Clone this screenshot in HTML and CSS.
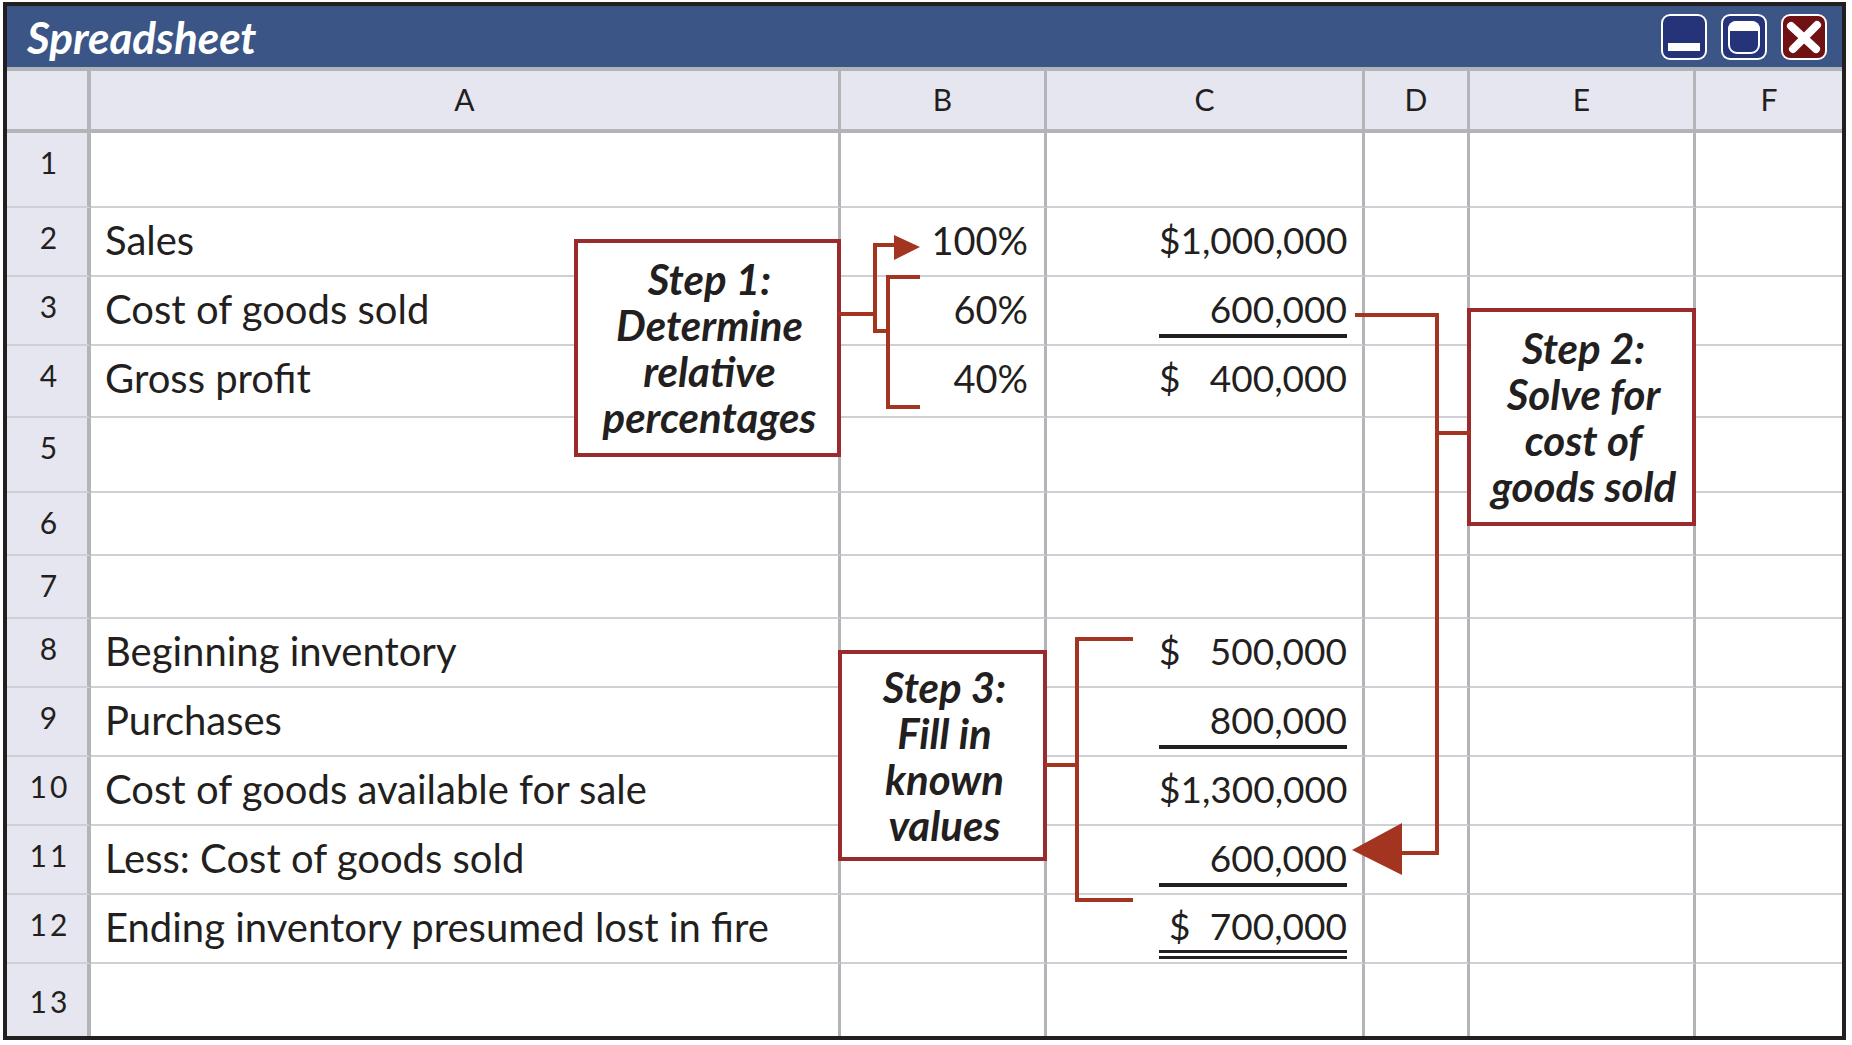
FILE: index.html
```
<!DOCTYPE html>
<html lang="en">
<head>
<meta charset="utf-8">
<title>Spreadsheet</title>
<link rel="stylesheet" href="styles.css">
</head>

<body>
<div class="window">
    <!-- title bar -->
    <div class="titlebar">
        <h1>Spreadsheet</h1>
        <button type="button" class="btn" aria-label="Minimize">
            <svg viewBox="0 0 46 46"><rect x="7" y="29" width="32" height="8" fill="#fff"/></svg>
        </button>
        <button type="button" class="btn" aria-label="Maximize">
            <svg viewBox="0 0 46 46">
                <rect x="8" y="8" width="30" height="31" rx="8" fill="none" stroke="#fff" stroke-width="2"/>
                <path d="M7 17v-2a8 8 0 0 1 8-8h16a8 8 0 0 1 8 8v2z" fill="#fff"/>
            </svg>
        </button>
        <button type="button" class="btn close" aria-label="Close">
            <svg viewBox="0 0 46 46"><path d="M10 12L35 35M36 11L12 35" stroke="#fff" stroke-width="8" stroke-linecap="round"/></svg>
        </button>
    </div>

    <table class="sheet">
        <colgroup>
            <col class="num"><col class="a"><col class="b"><col class="c"><col class="d"><col class="e"><col class="f">
        </colgroup>
        <thead>
            <tr><th></th><th>A</th><th>B</th><th>C</th><th>D</th><th>E</th><th>F</th></tr>
        </thead>
        <tbody>
            <tr class="tall"><th>1</th><td></td><td></td><td></td><td></td><td></td><td></td></tr>
            <tr>
                <th>2</th>
                <td class="anchor">Sales
                    <div class="note step1">Step 1:<br>Determine<br>relative<br>percentages</div>
                </td>
                <td class="percent anchor">100%
                    <svg class="link link1" width="80" height="204" viewBox="0 0 80 204">
                        <path d="M-3 106H34M55 37H34V123H47M79 69H47V199H79"/>
                        <polygon points="53,27 79,39 53,52"/>
                    </svg>
                </td>
                <td><div class="amount"><span>$</span><span>1,000,000</span></div></td>
                <td></td><td></td><td></td>
            </tr>
            <tr>
                <th>3</th>
                <td>Cost of goods sold</td>
                <td class="percent">60%</td>
                <td><div class="amount line"><span></span><span>600,000</span></div></td>
                <td class="anchor">
                    <svg class="link link2" width="120" height="600" viewBox="0 0 120 600">
                        <path d="M-10 38H72V576H36M72 156H106"/>
                        <polygon points="37,546 -13,573 37,598"/>
                    </svg>
                </td>
                <td class="anchor">
                    <div class="note">Step 2:<br>Solve for<br>cost of<br>goods sold</div>
                </td>
                <td></td>
            </tr>
            <tr class="mid">
                <th>4</th>
                <td>Gross profit</td>
                <td class="percent">40%</td>
                <td><div class="amount"><span>$</span><span>400,000</span></div></td>
                <td></td><td></td><td></td>
            </tr>
            <tr class="tall"><th>5</th><td></td><td></td><td></td><td></td><td></td><td></td></tr>
            <tr class="short"><th>6</th><td></td><td></td><td></td><td></td><td></td><td></td></tr>
            <tr class="short"><th>7</th><td></td><td></td><td></td><td></td><td></td><td></td></tr>
            <tr>
                <th>8</th>
                <td>Beginning inventory</td>
                <td class="anchor">
                    <div class="note step3">Step 3:<br>Fill in<br>known<br>values</div>
                </td>
                <td class="anchor">
                    <svg class="link link3" width="90" height="284" viewBox="0 0 90 284">
                        <path d="M86 20H30V281H86M-2 146H30"/>
                    </svg>
                    <div class="amount"><span>$</span><span>500,000</span></div>
                </td>
                <td></td><td></td><td></td>
            </tr>
            <tr>
                <th>9</th>
                <td>Purchases</td>
                <td></td>
                <td><div class="amount line"><span></span><span>800,000</span></div></td>
                <td></td><td></td><td></td>
            </tr>
            <tr>
                <th>10</th>
                <td>Cost of goods available for sale</td>
                <td></td>
                <td><div class="amount"><span>$</span><span>1,300,000</span></div></td>
                <td></td><td></td><td></td>
            </tr>
            <tr>
                <th>11</th>
                <td>Less: Cost of goods sold</td>
                <td></td>
                <td><div class="amount line"><span></span><span>600,000</span></div></td>
                <td></td><td></td><td></td>
            </tr>
            <tr>
                <th>12</th>
                <td>Ending inventory presumed lost in fire</td>
                <td></td>
                <td><div class="amount total"><span>$</span><span>700,000</span></div></td>
                <td></td><td></td><td></td>
            </tr>
            <tr class="last"><th>13</th><td></td><td></td><td></td><td></td><td></td><td></td></tr>
        </tbody>
    </table>
</div>
</body>
</html>
```
FILE: styles.css
```
*{box-sizing:border-box;}
body{margin:2px 6px 5px 3px; background:#fff; color:#231f20; font-family:Lato, "Open Sans", sans-serif;}
.window{border:4px solid #231f20;}

/* title bar */
.titlebar{display:flex; align-items:center; gap:14px; height:61px; padding:0 15px 0 20px; background:#3b5586;}
.titlebar h1{flex:1; margin:0; color:#fff; font-size:44px; line-height:48px; font-weight:bold; font-style:italic;}
.btn{width:46px; height:46px; padding:0; border:0; border-radius:9px; background:#253378; box-shadow:inset 0 0 0 2px #fff; cursor:pointer;}
.btn svg{display:block; width:46px; height:46px;}
.close{background:#701113;}

/* grid */
.sheet{width:100%; table-layout:fixed; border-collapse:separate; border-spacing:0;}
.num{width:84px;}
.a{width:40.87%;}
.b{width:11.23%;}
.c{width:17.33%;}
.d{width:5.72%;}
.e{width:12.32%;}

.sheet th,.sheet td{padding:0; border-right:3px solid #b3b4b8; border-bottom:2px solid #cfd0d3; vertical-align:top; white-space:nowrap;}
.sheet th{background:#e6e6f0; font-size:30px; line-height:40px; font-weight:normal; text-align:center;}
.sheet th:first-child{border-right-width:4px;}
.sheet tr > :last-child{border-right:0;}
.sheet thead th{height:66px; padding-top:8px; border-top:4px solid #b3b4b8; border-bottom:4px solid #b3b4b8;}
.sheet tbody th{padding:9px 0 0 6px; letter-spacing:3px;}
.sheet td{padding:7px 0 0 14px; font-size:40px; line-height:50px; text-align:left;}

tbody tr{height:69px;}
tbody .tall{height:75px;}
tbody .mid{height:72px;}
tbody .short{height:63px;}
tbody .last{height:72px;}
.sheet .last th{padding-top:17px;}
.sheet .last > *{border-bottom:0;}

.sheet .percent{padding-right:16px; font-size:38px; text-align:right;}
.amount{display:flex; justify-content:space-between; width:188px; margin:0 15px 0 auto; font-size:37px;}
.line{border-bottom:4px solid #231f20;}
.total{padding-left:10px; border-bottom:9px double #231f20; line-height:48px;}

/* step notes and their connectors */
.anchor{position:relative;}
.note{position:absolute; z-index:1; top:31px; left:-3px; right:-3px; padding:13px 0 13px 4px; border:4px solid #9b2a2c; background:#fff; font-size:42px; line-height:46px; font-weight:bold; font-style:italic; text-align:center;}
.step1{left:auto; width:267px;}
.step3{padding:10px 0 9px 4px;}
.link{position:absolute; z-index:2; top:0; left:0; overflow:visible;}
.link path{fill:none; stroke:#a33520; stroke-width:4;}
.link polygon{fill:#a33520;}
```
